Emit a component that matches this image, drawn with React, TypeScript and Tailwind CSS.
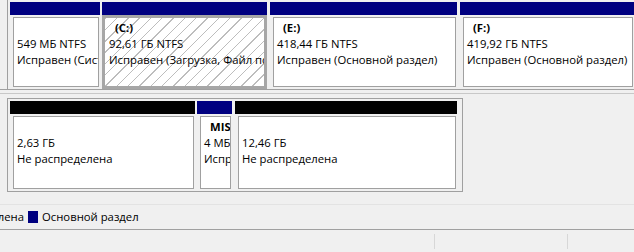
import React from 'react'

type Part = {
  width: string
  ml?: string
  bar: string
  label?: string
  lines: string[]
  selected?: boolean
}

const topDisk: Part[] = [
  { width: 'w-[90px]', bar: 'bg-[#000080]', lines: ['549 МБ NTFS', 'Исправен (Системный раздел)'] },
  {
    width: 'w-[165px]',
    ml: 'ml-[2px]',
    bar: 'bg-[#000080]',
    label: '(C:)',
    lines: ['92,61 ГБ NTFS', 'Исправен (Загрузка, Файл подкачки, Аварийный дамп)'],
    selected: true,
  },
  { width: 'w-[187px]', ml: 'ml-[3px]', bar: 'bg-[#000080]', label: '(E:)', lines: ['418,44 ГБ NTFS', 'Исправен (Основной раздел)'] },
  { width: 'w-[174px]', ml: 'ml-[3px]', bar: 'bg-[#000080]', label: '(F:)', lines: ['419,92 ГБ NTFS', 'Исправен (Основной раздел)'] },
]

const bottomDisk: Part[] = [
  { width: 'w-[185px]', bar: 'bg-black', lines: ['2,63 ГБ', 'Не распределена'] },
  { width: 'w-[35px]', ml: 'ml-[2px]', bar: 'bg-[#000080]', label: 'MISC', lines: ['4 МБ', 'Исправен (Основной раздел)'] },
  { width: 'w-[222px]', ml: 'ml-[3px]', bar: 'bg-black', lines: ['12,46 ГБ', 'Не распределена'] },
]

function Partition({ p }: { p: Part }) {
  return (
    <div className={`flex shrink-0 flex-col ${p.width} ${p.ml ?? ''}`}>
      <div className={`h-[13px] shrink-0 ${p.bar}`} />
      <div className={`flex min-h-0 flex-1 ${p.selected ? '' : 'pl-[3px] pr-[1px] pt-[2px] pb-[2px]'}`}>
        <div
          className={
            p.selected
              ? 'flex-1 overflow-hidden border-[3px] border-[#a6a6a6] bg-[repeating-linear-gradient(135deg,#bdbdbd_0px,#bdbdbd_1px,#ffffff_1px,#ffffff_8px)] pl-[4px] pt-[2px]'
              : 'flex-1 overflow-hidden border border-[#a0a0a0] bg-white pl-[3px] pt-[2px]'
          }
        >
          <div className="h-[16px] whitespace-nowrap pl-[6px] font-bold leading-[16px]">{p.label ?? ''}</div>
          {p.lines.map((l) => (
            <div key={l} className="h-[16px] whitespace-nowrap leading-[16px]">
              {l}
            </div>
          ))}
        </div>
      </div>
    </div>
  )
}

export default function App() {
  return (
    <div className="h-[252px] w-[634px] overflow-hidden bg-[#f0f0f0] text-[11.3px] text-black [font-family:'Segoe_UI','Open_Sans','Liberation_Sans',sans-serif]">
      {/* disk 0 */}
      <div className="flex h-[90px]">
        <div className="w-[8px] shrink-0 border-r border-b border-[#a0a0a0]" />
        <div className="flex min-w-0 flex-1 border-b border-[#a0a0a0] pl-[2px] pt-[2px]">
          {topDisk.map((p, i) => (
            <Partition key={i} p={p} />
          ))}
        </div>
      </div>
      <div className="h-[4px] border-b border-[#c8c8c8]" />

      {/* disk 1 */}
      <div className="flex pt-[4px]">
        <div className="w-[8px] shrink-0 border-r border-[#a0a0a0]" />
        <div className="flex h-[94px] w-[455px] border-t border-r border-b border-[#a0a0a0] pl-[2px] pt-[2px]">
          {bottomDisk.map((p, i) => (
            <Partition key={i} p={p} />
          ))}
        </div>
      </div>

      {/* legend */}
      <div className="mt-[12px] flex h-[25px] items-center border-t border-[#e3e3e3]">
        <div className="flex w-[24px] shrink-0 justify-end overflow-hidden whitespace-nowrap">Не распределена</div>
        <span className="ml-[4px] h-[12px] w-[10px] bg-[#000080]" />
        <span className="ml-[4px]">Основной раздел</span>
      </div>

      {/* status bar */}
      <div className="flex h-[20px] border-t border-[#a0a0a0] pt-[4px]">
        <div className="w-[435px] border-r border-[#d7d7d7]" />
        <div className="w-[133px] border-r border-[#d7d7d7]" />
        <div className="flex-1" />
      </div>
    </div>
  )
}
